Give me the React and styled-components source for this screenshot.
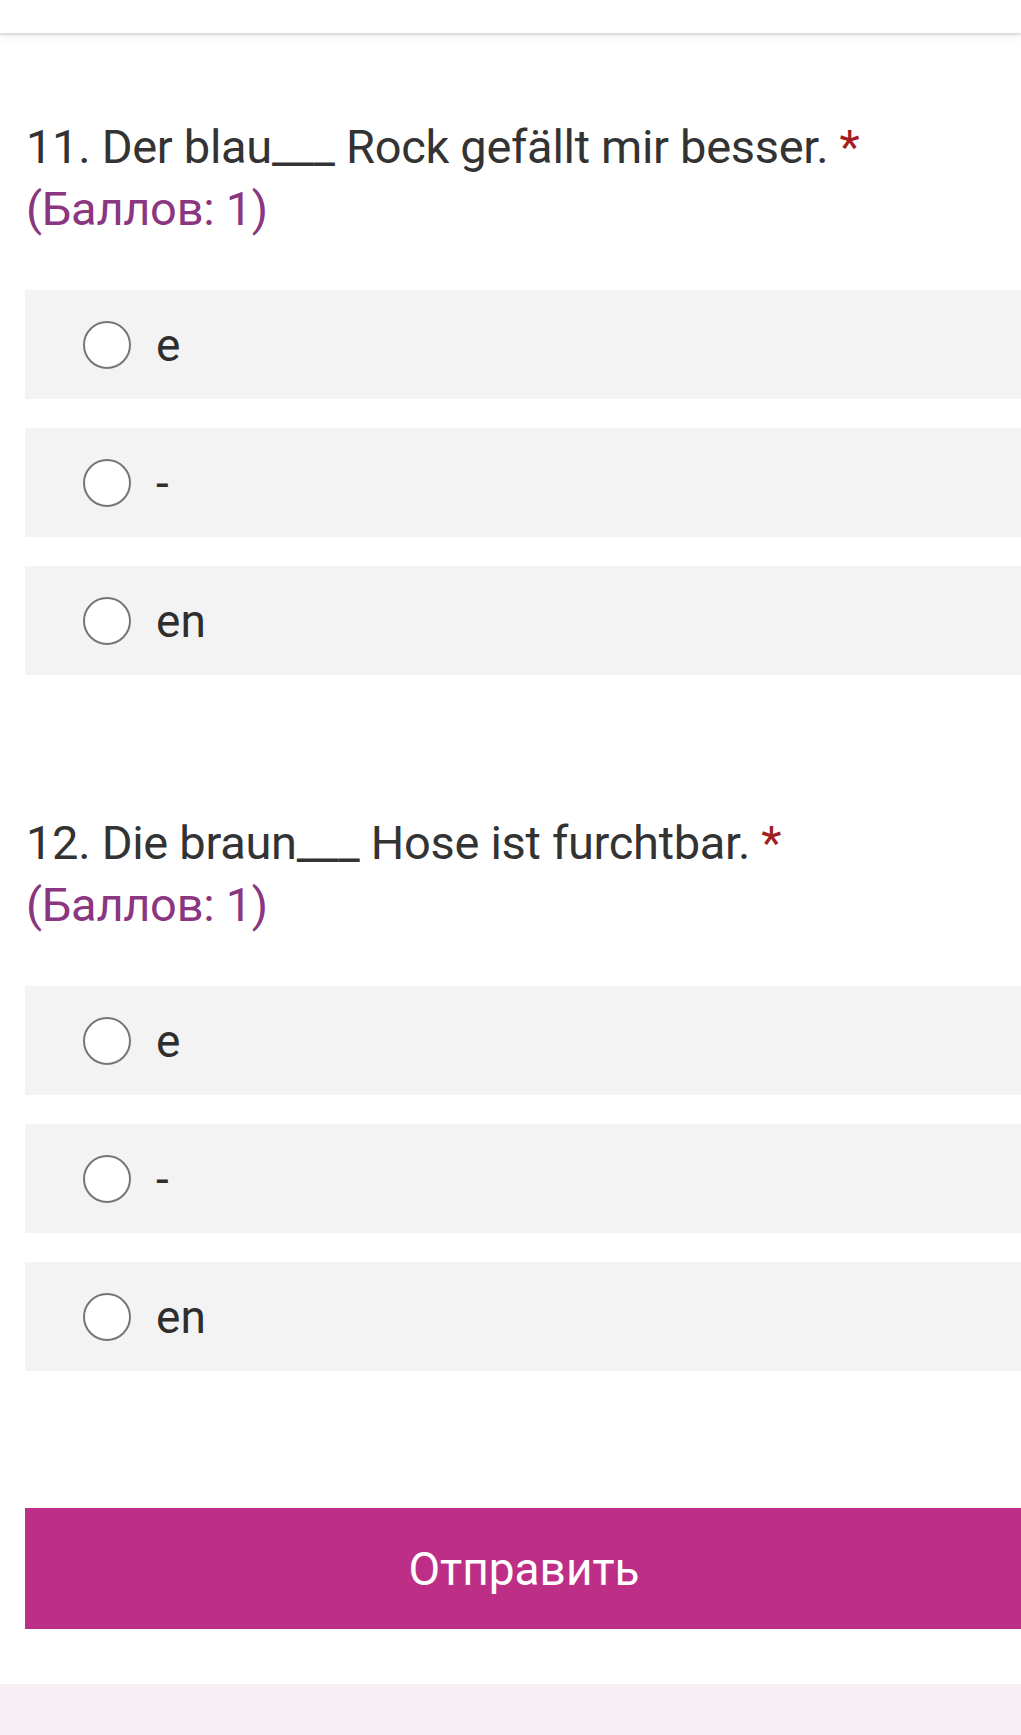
import React from "react";
import styled, { createGlobalStyle } from "styled-components";

const questions = [
  {
    id: 11,
    text: "Der blau___ Rock gefällt mir besser.",
    options: ["e", "-", "en"],
  },
  {
    id: 12,
    text: "Die braun___ Hose ist furchtbar.",
    options: ["e", "-", "en"],
  },
];

function App() {
  return (
    <>
      <GlobalStyle />
      <StyledTopBar />
      <StyledForm>
        {questions.map((q) => (
          <StyledQuestion key={q.id}>
            <StyledTitle>
              {q.id}. {q.text} <StyledRequired>*</StyledRequired>
              <br />
              <StyledPoints>(Баллов: 1)</StyledPoints>
            </StyledTitle>
            <StyledOptions>
              {q.options.map((opt) => (
                <StyledOption key={opt}>
                  <StyledRadio />
                  <StyledOptionLabel>{opt}</StyledOptionLabel>
                </StyledOption>
              ))}
            </StyledOptions>
          </StyledQuestion>
        ))}
        <StyledSubmit>Отправить</StyledSubmit>
      </StyledForm>
      <StyledFooter />
    </>
  );
}

export default App;

const GlobalStyle = createGlobalStyle`
  html, body {
    margin: 0;
    padding: 0;
    background: #ffffff;
    overflow-x: hidden;
  }
  body {
    font-family: Roboto, "Noto Sans", "Liberation Sans", sans-serif;
    color: #2b2b2b;
  }
`;

const StyledTopBar = styled.div`
  height: 33px;
  background-color: #ffffff;
  box-shadow: 0 2px 2px rgba(0, 0, 0, 0.12), 0 4px 14px rgba(0, 0, 0, 0.05);
  position: relative;
`;

const StyledForm = styled.div`
  width: 998px;
  padding: 83px 0 55px 25px;
  display: flex;
  flex-direction: column;
  gap: 137px;
`;

const StyledQuestion = styled.div`
  display: flex;
  flex-direction: column;
  gap: 50px;
`;

const StyledTitle = styled.div`
  font-size: 47px;
  line-height: 62px;
  font-weight: 400;
  color: #333333;
  padding-left: 1px;
  letter-spacing: -0.3px;
`;

const StyledRequired = styled.span`
  color: #a31d1d;
`;

const StyledPoints = styled.span`
  color: #8b3680;
`;

const StyledOptions = styled.div`
  display: flex;
  flex-direction: column;
  gap: 29px;
`;

const StyledOption = styled.div`
  height: 109px;
  background-color: #f3f3f3;
  display: flex;
  align-items: center;
  padding-left: 58px;
`;

const StyledRadio = styled.div`
  width: 48px;
  height: 48px;
  box-sizing: border-box;
  border-radius: 50%;
  border: 2.5px solid #767676;
  background-color: #ffffff;
  flex-shrink: 0;
`;

const StyledOptionLabel = styled.div`
  margin-left: 25px;
  font-size: 46px;
  color: #2e2e2e;
`;

const StyledSubmit = styled.div`
  height: 121px;
  background-color: #bd2f86;
  color: #ffffff;
  font-size: 46px;
  display: flex;
  align-items: center;
  justify-content: center;
`;

const StyledFooter = styled.div`
  height: 53px;
  background-color: #f6f0f5;
`;
